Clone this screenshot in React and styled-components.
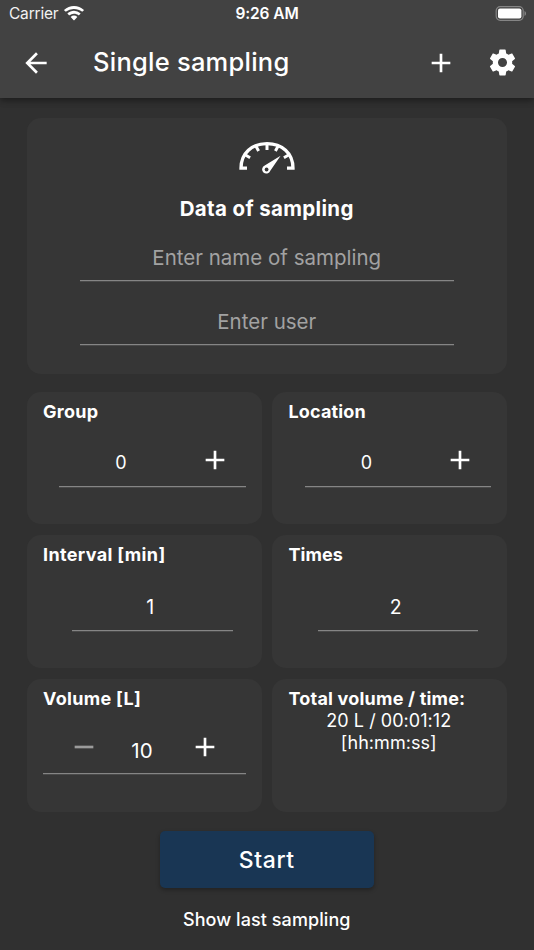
import React from 'react';
import styled, { createGlobalStyle } from 'styled-components';

const GlobalStyle = createGlobalStyle`
  * { box-sizing: border-box; }
  body { margin: 0; background: #303030; }
`;

const Screen = styled.div`
  width: 534px;
  height: 950px;
  display: flex;
  flex-direction: column;
  overflow: hidden;
  background: #303030;
  color: #fff;
  font-family: Inter, "Liberation Sans", sans-serif;
`;

const Header = styled.header`
  height: 98px;
  flex: none;
  background: #424242;
  box-shadow: 0 3px 6px rgba(0, 0, 0, 0.32), 0 1px 10px rgba(0, 0, 0, 0.1);
`;

const StatusBar = styled.div`
  height: 27px;
  display: grid;
  grid-template-columns: 1fr auto 1fr;
  align-items: center;
  padding: 0 8px 0 9px;
  line-height: 27px;
`;

const Carrier = styled.div`
  display: flex;
  align-items: center;
  gap: 6px;
  font-size: 15.5px;
  letter-spacing: -0.2px;
  color: #f2f2f2;
`;

const Clock = styled.div`
  margin-right: 1px;
  font-size: 15.5px;
  font-weight: 600;
  letter-spacing: -0.1px;
`;

const BatterySlot = styled.div`
  display: flex;
  justify-content: flex-end;
`;

const Toolbar = styled.div`
  height: 71px;
  display: flex;
  align-items: center;
  padding: 0 15.5px 0 20px;
`;

const IconButton = styled.button`
  width: 32px;
  height: 32px;
  padding: 0;
  border: 0;
  background: none;
  display: flex;
  align-items: center;
  justify-content: center;
  justify-self: center;
  color: ${(p) => (p.$muted ? '#9b9b9b' : '#fff')};
`;

const PageTitle = styled.h1`
  flex: 1;
  margin: 0 0 1px 41px;
  font-size: 25.5px;
  line-height: 32px;
  font-weight: 500;
  letter-spacing: 0.24px;
`;

const Actions = styled.div`
  display: flex;
  gap: 30px;
`;

const Content = styled.main`
  flex: 1;
  display: flex;
  flex-direction: column;
  align-items: center;
  padding: 20px 27px 0 26.5px;
`;

const Card = styled.section`
  background: #363636;
  border-radius: 14px;
`;

const SamplingCard = styled(Card)`
  width: 100%;
  height: 256px;
  display: flex;
  flex-direction: column;
  align-items: center;
  padding-top: 22px;
`;

const SamplingTitle = styled.h2`
  margin: 21px 0 0;
  font-size: 20.5px;
  line-height: 28px;
  font-weight: 700;
  letter-spacing: 0.35px;
`;

const TextField = styled.input`
  width: 374px;
  height: ${(p) => p.$height}px;
  padding: ${(p) => p.$top}px 0 0;
  border: 0;
  border-bottom: 1px solid #858585;
  box-shadow: 0 1px 0 #4a4a4a;
  outline: 0;
  background: none;
  color: #fff;
  text-align: center;
  font-family: inherit;
  font-size: 20.5px;
  letter-spacing: 0;
  &::placeholder { color: #a2a2a2; opacity: 1; }
`;

const Grid = styled.div`
  width: 100%;
  display: grid;
  grid-template-columns: repeat(2, minmax(0, 1fr));
  grid-auto-rows: 132.7px;
  gap: 11px 10.5px;
  margin-top: 17.5px;
`;

const SettingCard = styled(Card)`
  padding: 9px 16px 0 16.5px;
`;

const SettingTitle = styled.h3`
  margin: 0;
  font-size: 18px;
  line-height: 22px;
  font-weight: 700;
  letter-spacing: ${(p) => p.$spacing || 0}px;
  white-space: nowrap;
`;

const Field = styled.div`
  height: 54px;
  margin: 10.5px ${(p) => p.$right || 0}px 0 ${(p) => p.$left || 0}px;
  border-bottom: 1px solid #858585;
  box-shadow: 0 1px 0 #4a4a4a;
  display: grid;
  grid-template-columns: ${(p) => p.$columns || '1fr'};
  align-items: center;
`;

const Value = styled.span`
  padding-top: ${(p) => p.$drop || 6}px;
  padding-right: ${(p) => p.$shift || 0}px;
  text-align: center;
  font-size: ${(p) => p.$size || 19.5}px;
  line-height: 24px;
`;

const Total = styled.p`
  margin: 0;
  padding-right: 2px;
  font-size: 18px;
  line-height: 22px;
  text-align: center;
  letter-spacing: 0.05px;
`;

const StartButton = styled.button`
  width: 214px;
  height: 57px;
  margin-top: 19px;
  padding: 1px 0 0;
  border: 0;
  border-radius: 5px;
  background: #193654;
  box-shadow: 0 2px 4px rgba(0, 0, 0, 0.3);
  color: #fff;
  font-family: inherit;
  font-size: 23px;
  font-weight: 500;
  letter-spacing: 0.6px;
`;

const LastSampling = styled.button`
  margin-top: 19px;
  padding: 0;
  border: 0;
  background: none;
  color: #fff;
  font-family: inherit;
  font-size: 18px;
  line-height: 26px;
  font-weight: 500;
  letter-spacing: 0.08px;
`;

const WifiIcon = () => (
  <svg width="20" height="15" viewBox="0 0 20 15" fill="#fff">
    <path d="M10 0C6.300 0 2.800 1.400.3 3.800a.4.400 0 0 0 0 .6l1.200 1.200c.2.200.4.200.6 0A11.400 11.400 0 0 1 10 2.900c3 0 5.800 1 7.900 2.700.2.200.4.200.6 0l1.200-1.200a.4.400 0 0 0 0-.6C17.200 1.400 13.700 0 10 0Z" />
    <path d="M10 4.700c-2.400 0-4.700.9-6.400 2.500a.4.400 0 0 0 0 .6L5 9.200c.2.200.4.200.6 0A6.800 6.800 0 0 1 10 7.700c1.700 0 3.200.5 4.400 1.500.2.200.4.200.6 0l1.400-1.400a.4.400 0 0 0 0-.6A9.400 9.400 0 0 0 10 4.700Z" />
    <path d="M10 9.500c-1.200 0-2.300.4-3.100 1.200a.4.400 0 0 0 0 .6l2.800 3c.2.200.4.200.6 0l2.800-3a.4.400 0 0 0 0-.6c-.8-.8-1.900-1.200-3.100-1.200Z" />
  </svg>
);

const BatteryIcon = () => (
  <svg width="31" height="15" viewBox="0 0 31 15">
    <rect x="1.200" y="0.700" width="27" height="13.600" rx="4" fill="none" stroke="#858585" strokeWidth="1.200" />
    <rect x="3" y="2.600" width="23.400" height="9.800" rx="2" fill="#fff" />
    <path d="M29.500 5v5c1-.4 1.500-1.400 1.500-2.500S30.500 5.400 29.500 5Z" fill="#858585" />
  </svg>
);

const BackIcon = () => (
  <svg width="32" height="32" viewBox="0 0 24 24" fill="currentColor">
    <path d="M20 11H7.830l5.590-5.590L12 4l-8 8 8 8 1.410-1.410L7.830 13H20v-2z" />
  </svg>
);

const PlusIcon = () => (
  <svg width="32" height="32" viewBox="0 0 24 24" fill="currentColor">
    <path d="M19 13h-6v6h-2v-6H5v-2h6V5h2v6h6v2z" />
  </svg>
);

const MinusIcon = () => (
  <svg width="32" height="32" viewBox="0 0 24 24" fill="currentColor">
    <path d="M19 13H5v-2h14v2z" />
  </svg>
);

const GearIcon = () => (
  <svg width="31" height="31" viewBox="0 0 24 24" fill="currentColor">
    <path d="M19.430 12.980c.04-.32.070-.64.070-.98s-.03-.66-.07-.98l2.110-1.650c.19-.15.240-.42.120-.64l-2-3.460c-.12-.22-.39-.3-.61-.22l-2.490 1c-.52-.4-1.080-.73-1.690-.98l-.38-2.650C14.460 2.180 14.250 2 14 2h-4c-.25 0-.46.180-.49.420l-.38 2.650c-.61.250-1.170.590-1.690.980l-2.490-1c-.23-.09-.49 0-.61.220l-2 3.460c-.13.220-.07.490.12.640l2.110 1.650c-.04.320-.07.650-.07.980s.03.660.07.980l-2.110 1.650c-.19.150-.24.420-.12.640l2 3.460c.12.220.39.300.61.220l2.490-1c.52.400 1.080.730 1.690.980l.38 2.650c.03.240.24.420.49.420h4c.25 0 .46-.18.490-.42l.38-2.650c.61-.25 1.170-.59 1.690-.98l2.490 1c.23.090.49 0 .61-.22l2-3.460c.12-.22.070-.49-.12-.64l-2.110-1.650zM12 15.500c-1.930 0-3.500-1.570-3.500-3.500s1.570-3.500 3.500-3.500 3.500 1.570 3.500 3.500-1.570 3.500-3.500 3.500z" />
  </svg>
);

const GaugeIcon = () => (
  <svg width="56" height="34" viewBox="0 0 56 34" fill="none" stroke="#fff">
    <path d="M8 28.200H2C2 13 13 3.600 28 3.600S54 13 54 28.200H48" strokeWidth="3.300" />
    <path d="M28 4v6M17 6.300l2.600 4.600M39 6.300l-2.600 4.600M6.500 15l4.600 2.700M49.500 15l-4.600 2.700" strokeWidth="3" />
    <path d="M41.600 15.800 25.700 25.500a4.200 4.200 0 1 0 5.600 5.200Z" fill="#fff" stroke="none" />
    <circle cx="27.600" cy="29.500" r="1.900" fill="#363636" stroke="none" />
  </svg>
);

const CounterCard = ({ title, spacing }) => (
  <SettingCard>
    <SettingTitle $spacing={spacing}>{title}</SettingTitle>
    <Field $left={16} $columns="124px 63px">
      <Value $size={18}>0</Value>
      <IconButton aria-label="Increase"><PlusIcon /></IconButton>
    </Field>
  </SettingCard>
);

const NumberCard = ({ title, value, spacing }) => (
  <SettingCard>
    <SettingTitle $spacing={spacing}>{title}</SettingTitle>
    <Field $left={29} $right={13}>
      <Value $drop={7} $shift={4}>{value}</Value>
    </Field>
  </SettingCard>
);

export default function App() {
  return (
    <Screen>
      <GlobalStyle />
      <Header>
        <StatusBar>
          <Carrier>Carrier <WifiIcon /></Carrier>
          <Clock>9:26 AM</Clock>
          <BatterySlot><BatteryIcon /></BatterySlot>
        </StatusBar>
        <Toolbar>
          <IconButton aria-label="Back"><BackIcon /></IconButton>
          <PageTitle>Single sampling</PageTitle>
          <Actions>
            <IconButton aria-label="Add"><PlusIcon /></IconButton>
            <IconButton aria-label="Settings"><GearIcon /></IconButton>
          </Actions>
        </Toolbar>
      </Header>
      <Content>
        <SamplingCard>
          <GaugeIcon />
          <SamplingTitle>Data of sampling</SamplingTitle>
          <TextField placeholder="Enter name of sampling" $height={58} $top={11} />
          <TextField placeholder="Enter user" $height={64} $top={18} />
        </SamplingCard>
        <Grid>
          <CounterCard title="Group" spacing={0.3} />
          <CounterCard title="Location" spacing={0.15} />
          <NumberCard title="Interval [min]" value="1" spacing={0.35} />
          <NumberCard title="Times" value="2" spacing={0.05} />
          <SettingCard>
            <SettingTitle $spacing={0.32}>Volume [L]</SettingTitle>
            <Field $columns="82px 38px 83px">
              <IconButton $muted aria-label="Decrease"><MinusIcon /></IconButton>
              <Value $size={20.5} $drop={8} $shift={4}>10</Value>
              <IconButton aria-label="Increase"><PlusIcon /></IconButton>
            </Field>
          </SettingCard>
          <SettingCard>
            <SettingTitle $spacing={0.2}>Total volume / time:</SettingTitle>
            <Total>20 L / 00:01:12<br />[hh:mm:ss]</Total>
          </SettingCard>
        </Grid>
        <StartButton>Start</StartButton>
        <LastSampling>Show last sampling</LastSampling>
      </Content>
    </Screen>
  );
}
